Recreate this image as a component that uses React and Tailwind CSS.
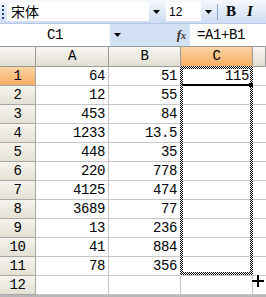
import React from "react";

const data = [
  ["64", "51", "115"],
  ["12", "55", ""],
  ["453", "84", ""],
  ["1233", "13.5", ""],
  ["448", "35", ""],
  ["220", "778", ""],
  ["4125", "474", ""],
  ["3689", "77", ""],
  ["13", "236", ""],
  ["41", "884", ""],
  ["78", "356", ""],
  ["", "", ""],
];

const mono = { fontFamily: '"Liberation Mono", "Noto Sans CJK SC", monospace' };

function Arrow() {
  return (
    <svg width="7" height="4" viewBox="0 0 7 4">
      <path d="M0 0h7L3.5 4z" fill="#000" />
    </svg>
  );
}

export default function App() {
  return (
    <div className="relative w-[266px] h-[297px] overflow-hidden bg-white" style={mono}>
      {/* toolbar */}
      <div className="flex h-[24px] items-center bg-gradient-to-b from-[#f5f8fd] to-[#cddcf2] border-b border-[#b4c8e6]">
        <div className="ml-[2px] mr-[3px] h-[14px] w-[2px] bg-[repeating-linear-gradient(#27417a_0_2px,transparent_2px_4px)]" />
        <div className="flex h-[19px] w-[142px] items-center bg-white pl-[4px] text-[14px] text-black" style={{ fontFamily: '"Noto Sans CJK SC", sans-serif' }}>
          宋体
        </div>
        <div className="flex h-[19px] w-[14px] items-center justify-center">
          <Arrow />
        </div>
        <div className="ml-[3px] flex h-[19px] w-[35px] items-center bg-white pl-[3px] text-[12px] text-black" style={{ fontFamily: '"Liberation Sans", sans-serif' }}>
          12
        </div>
        <div className="flex h-[19px] w-[14px] items-center justify-center">
          <Arrow />
        </div>
        <div className="ml-[2px] h-[16px] w-px bg-[#8aa4cc]" />
        <div className="ml-[8px] text-[15px] font-bold text-black" style={{ fontFamily: '"Liberation Serif", serif' }}>B</div>
        <div className="ml-[11px] text-[15px] font-bold italic text-black" style={{ fontFamily: '"Liberation Serif", serif' }}>I</div>
      </div>

      {/* formula bar */}
      <div className="flex h-[22px] items-stretch bg-[#d3e1f5]">
        <div className="flex w-[110px] items-center justify-center bg-white text-[14px] tracking-[-0.4px] text-black">C1</div>
        <div className="flex w-[14px] items-center justify-center">
          <Arrow />
        </div>
        <div className="flex flex-1 items-center justify-end pr-[4px] text-[13px] italic font-bold text-[#333]" style={{ fontFamily: '"Liberation Serif", serif' }}>
          f<span className="text-[10px]">x</span>
        </div>
        <div className="flex w-[76px] items-center bg-white pl-[7px] text-[14px] tracking-[-0.4px] text-black">=A1+B1</div>
      </div>

      {/* sheet */}
      <div className="grid grid-cols-[36px_73px_72px_72px_1fr] text-[14px] tracking-[-0.4px] text-black">
        <div className="h-[21px] border-r border-b border-t border-[#9a9a9a] bg-gradient-to-b from-[#f7f6f1] to-[#e2dfd2]" />
        {["A", "B", "C", ""].map((c, i) => (
          <div
            key={i}
            className={
              "flex h-[21px] items-center justify-center border-r border-b border-t border-[#9a9a9a] " +
              (c === "C"
                ? "bg-gradient-to-b from-[#fbd4a4] to-[#f6ae62]"
                : "bg-gradient-to-b from-[#f7f6f1] to-[#e2dfd2]")
            }
          >
            {c}
          </div>
        ))}
        {data.map((r, i) => (
          <React.Fragment key={i}>
            <div
              className={
                "flex h-[19px] items-center justify-center border-r border-b border-[#a8a8a8] " +
                (i === 0
                  ? "bg-gradient-to-b from-[#fbd4a4] to-[#f6ae62]"
                  : "bg-gradient-to-b from-[#f5f4ee] to-[#e4e1d4]")
              }
            >
              {i + 1}
            </div>
            {r.map((v, j) => (
              <div key={j} className="flex h-[19px] items-center justify-end border-r border-b border-[#c6c6c6] pr-[3px]">
                {v}
              </div>
            ))}
            <div className="h-[19px] border-b border-[#c6c6c6]" />
          </React.Fragment>
        ))}
      </div>
      <div className="h-[2px] bg-[#b8b8b8]" />

      {/* copy marquee around C1:C11 */}
      <div className="absolute left-[180px] top-[66px] h-[3px] w-[73px] bg-[repeating-conic-gradient(#000_0_25%,#fff_0_50%)] bg-[length:2px_2px]" />
      <div className="absolute left-[180px] top-[272px] h-[3px] w-[73px] bg-[repeating-conic-gradient(#000_0_25%,#fff_0_50%)] bg-[length:2px_2px]" />
      <div className="absolute left-[180px] top-[66px] h-[209px] w-[3px] bg-[repeating-conic-gradient(#000_0_25%,#fff_0_50%)] bg-[length:2px_2px]" />
      <div className="absolute left-[250px] top-[66px] h-[209px] w-[3px] bg-[repeating-conic-gradient(#000_0_25%,#fff_0_50%)] bg-[length:2px_2px]" />
      <div className="absolute left-[182px] top-[84px] h-[2px] w-[68px] bg-black" />
      <div className="absolute left-[249px] top-[83px] h-[4px] w-[4px] bg-black" />

      {/* fill cursor */}
      <svg className="absolute left-[251px] top-[274px]" width="14" height="14" viewBox="0 0 14 14">
        <path d="M5 0h4v5h5v4H9v5H5V9H0V5h5z" fill="#fff" />
        <path d="M6 1h2v5h5v2H8v5H6V8H1V6h5z" fill="#000" />
      </svg>
    </div>
  );
}
